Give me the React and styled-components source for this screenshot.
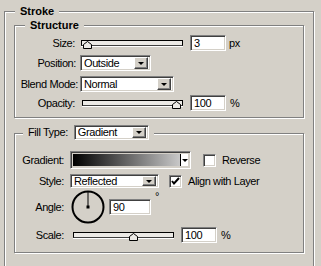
import React from 'react';
import styled, {createGlobalStyle} from 'styled-components';

const bg = '#D4D0C8';

const GlobalStyle = createGlobalStyle`
  html, body {
    margin: 0;
    padding: 0;
    background: ${bg};
    overflow: hidden;
  }
  body {
    font-family: "Liberation Sans", Arial, sans-serif;
    font-size: 11px;
    letter-spacing: -0.4px;
    color: #000;
  }
`;

// etched group frame (grey line + white highlight)
const Group = styled.div`
  position: relative;
  box-sizing: border-box;
  border: 1px solid #808080;
  box-shadow: inset 1px 1px #fff, 1px 1px #fff;
`;

const Outer = styled(Group)`
  margin: 11px 0 0 4px;
  width: 310px;
  height: 255px;
  border-bottom: none;
  padding: 13px 0 0 9px;
`;

const Inner = styled(Group)`
  width: 290px;
  height: ${(p) => p.$h}px;
  margin-top: ${(p) => p.$mt || 0}px;
  padding-top: ${(p) => p.$pt}px;
  display: flex;
  flex-direction: column;
`;

const Legend = styled.div`
  position: absolute;
  top: ${(p) => p.$top}px;
  left: ${(p) => p.$left}px;
  padding: 0 ${(p) => p.$pr || 5}px 0 5px;
  background: ${bg};
  font-weight: ${(p) => (p.$bold ? 'bold' : 'normal')};
  letter-spacing: ${(p) => (p.$bold ? '0' : '-0.4px')};
  line-height: 13px;
  display: flex;
  align-items: center;
  gap: 6px;
`;

const Row = styled.div`
  display: flex;
  align-items: center;
  height: ${(p) => p.$h || 16}px;
  margin-top: ${(p) => p.$mt || 0}px;
`;

const Label = styled.span`
  width: ${(p) => p.$w}px;
  text-align: right;
  margin-right: ${(p) => p.$gap}px;
  flex: none;
`;

const sunken = `
  box-sizing: border-box;
  border: 1px solid;
  border-color: #808080 #fff #fff #808080;
  box-shadow: inset 1px 1px #404040, inset -1px -1px ${bg};
`;

const Field = styled.div`
  ${sunken}
  width: ${(p) => p.$w}px;
  height: 16px;
  background: #fff;
  padding: 2px 0 0 3px;
  line-height: 11px;
  margin-left: ${(p) => p.$ml || 0}px;
`;

const Unit = styled.span`
  margin-left: ${(p) => p.$ml || 3}px;
  align-self: ${(p) => (p.$top ? 'flex-start' : 'center')};
`;

const Select = styled.div`
  ${sunken}
  display: flex;
  align-items: center;
  width: ${(p) => p.$w}px;
  height: ${(p) => p.$h || 16}px;
  background: #fff;
  padding: 0 2px 0 3px;
`;

const DropBtn = styled.div`
  margin-left: auto;
  box-sizing: border-box;
  width: 14px;
  height: ${(p) => p.$h || 12}px;
  background: ${bg};
  border: 1px solid;
  border-color: #fff #404040 #404040 #fff;
  box-shadow: inset -1px -1px #808080;
  display: flex;
  align-items: center;
  justify-content: center;
`;

const Arrow = styled.span`
  width: 0;
  height: 0;
  border-left: 3px solid transparent;
  border-right: 3px solid transparent;
  border-top: 3px solid #000;
`;

const Track = styled.div`
  position: relative;
  box-sizing: border-box;
  width: ${(p) => p.$w}px;
  height: 6px;
  border: 1px solid #000;
  border-bottom-color: #404040;
  background: #ECEAE6;
  box-shadow: 0 1px 0 #fff;
  margin: 0 ${(p) => p.$mr}px 0 ${(p) => p.$ml}px;
  flex: none;
  align-self: flex-start;
  margin-top: 5px;
`;

const Thumb = styled.svg`
  position: absolute;
  top: 0;
`;

const GradientBox = styled.div`
  ${sunken}
  display: flex;
  width: 121px;
  height: 18px;
  padding: 2px;
`;

const Swatch = styled.div`
  flex: 1;
  background: linear-gradient(to right, #000, #c8c8c8);
`;

const ArrowCell = styled.div`
  width: 7px;
  border-left: 1px solid #000;
  background: #fff;
  display: flex;
  align-items: center;
  justify-content: center;
`;

const Check = styled.div`
  ${sunken}
  width: 13px;
  height: 13px;
  background: #fff;
  margin: 0 6px 0 ${(p) => p.$ml}px;
  display: flex;
  align-items: center;
  justify-content: center;
`;

const Dial = styled.svg`
  margin-left: 1px;
  flex: none;
`;

const Slider = ({width, value, ml, mr}) => (
  <Track $w={width} $ml={ml} $mr={mr}>
    <Thumb
      width="9"
      height="8"
      viewBox="0 0 9 8"
      style={{left: Math.round((width - 11) * value) - 1}}
    >
      <polygon
        points="0.5,7.5 0.5,3.5 4.5,0.5 8.5,3.5 8.5,7.5"
        fill="#ECEAE6"
        stroke="#000"
      />
    </Thumb>
  </Track>
);

const Drop = ({w, h, btnH, children}) => (
  <Select $w={w} $h={h}>
    {children}
    <DropBtn $h={btnH}>
      <Arrow />
    </DropBtn>
  </Select>
);

const App = () => (
  <>
    <GlobalStyle />
    <Outer>
      <Legend $top={-7} $left={10} $bold>Stroke</Legend>

      <Inner $h={93} $pt={9}>
        <Legend $top={-7} $left={10} $bold>Structure</Legend>
        <Row>
          <Label $w={60} $gap={0}>Size:</Label>
          <Slider width={102} value={0.02} ml={6} mr={7} />
          <Field $w={36}>3</Field>
          <Unit>px</Unit>
        </Row>
        <Row $mt={4}>
          <Label $w={61} $gap={4}>Position:</Label>
          <Drop w={71}>Outside</Drop>
        </Row>
        <Row $mt={5}>
          <Label $w={63} $gap={2}>Blend Mode:</Label>
          <Drop w={94}>Normal</Drop>
        </Row>
        <Row $mt={3}>
          <Label $w={60} $gap={0}>Opacity:</Label>
          <Slider width={101} value={1} ml={7} mr={7} />
          <Field $w={36}>100</Field>
          <Unit $ml={4}>%</Unit>
        </Row>
      </Inner>

      <Inner $h={120} $pt={17} $mt={15}>
        <Legend $top={-9} $left={8}>
          <span>Fill Type:</span>
          <Drop w={75} h={15} btnH={11}>Gradient</Drop>
        </Legend>
        <Row $h={18}>
          <Label $w={49} $gap={6}>Gradient:</Label>
          <GradientBox>
            <Swatch />
            <ArrowCell>
              <Arrow />
            </ArrowCell>
          </GradientBox>
          <Check $ml={12} />
          <span>Reverse</span>
        </Row>
        <Row $h={14} $mt={5}>
          <Label $w={49} $gap={6}>Style:</Label>
          <Drop w={89} h={14} btnH={10}>Reflected</Drop>
          <Check $ml={10}>
            <svg width="9" height="9" viewBox="0 0 9 9">
              <path d="M1 4 L3 6.5 L8 1" fill="none" stroke="#000" strokeWidth="2" />
            </svg>
          </Check>
          <span>Align with Layer</span>
        </Row>
        <Row $h={34} $mt={2}>
          <Label $w={49} $gap={6}>Angle:</Label>
          <Dial width="34" height="34" viewBox="0 0 34 34">
            <circle cx="17" cy="17" r="15.5" fill="none" stroke="#000" strokeWidth="2" />
            <line x1="17" y1="17" x2="17" y2="2" stroke="#000" strokeWidth="1" />
            <rect x="15.5" y="15.5" width="3" height="3" fill="#000" />
          </Dial>
          <Field $w={42} $ml={4}>90</Field>
          <Unit $ml={4} $top>°</Unit>
        </Row>
        <Row $mt={3}>
          <Label $w={49} $gap={6}>Scale:</Label>
          <Slider width={101} value={0.62} ml={3} mr={7} />
          <Field $w={36}>100</Field>
          <Unit $ml={4}>%</Unit>
        </Row>
      </Inner>
    </Outer>
  </>
);

export default App;
